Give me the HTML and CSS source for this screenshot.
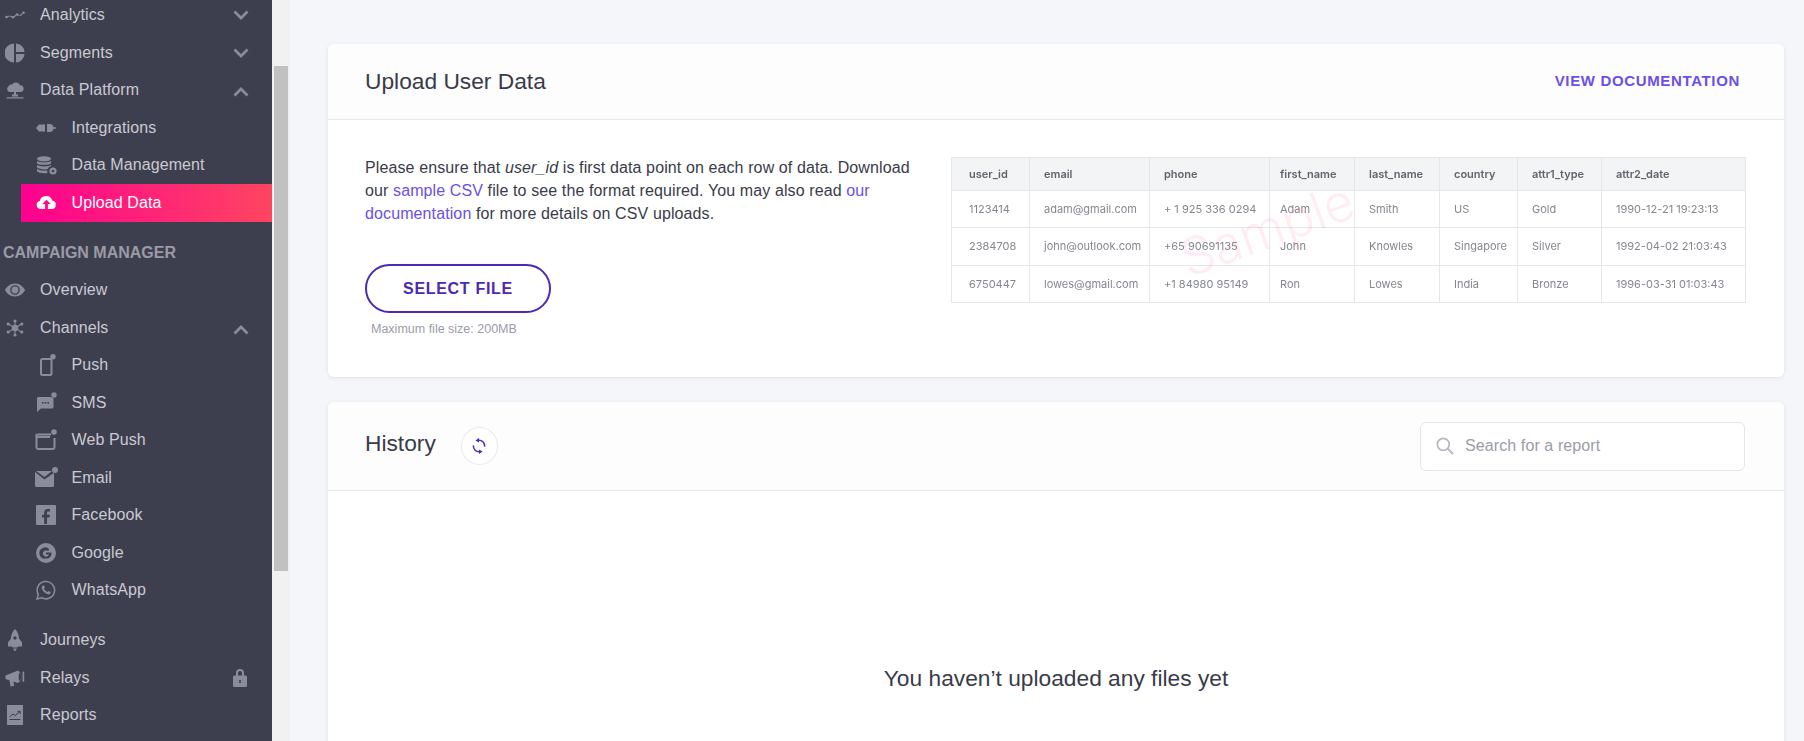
FILE: index.html
```html
<!DOCTYPE html>
<html lang="en">
<head>
<meta charset="utf-8">
<title>Upload User Data</title>
<link rel="stylesheet" href="styles.css">
</head>
<body>
<div class="app">
  <nav class="sidebar">
    <div class="nav-list">
      <a class="nav-item"><span class="ico"><svg width="20" height="8" viewBox="0 0 20 8"><path d="M1.5 6 L5 5 L8 6.3 L12 3.5 L15 4.8 L18.5 1.7" fill="none" stroke="currentColor" stroke-width="1.2" stroke-dasharray="3 .8"/><g fill="currentColor"><circle cx="1.5" cy="6" r="1.3"/><circle cx="8" cy="6.3" r="1.3"/><circle cx="12" cy="3.5" r="1.3"/><circle cx="18.5" cy="1.7" r="1.3"/></g></svg></span><span class="label">Analytics</span><svg class="chev" width="16" height="10" viewBox="0 0 16 10"><path d="M1.5 1.5 L8 8 L14.5 1.5" fill="none" stroke="currentColor" stroke-width="2.7"/></svg></a>
      <a class="nav-item"><span class="ico"><svg width="20" height="20" viewBox="0 0 20 20"><path fill="currentColor" d="M9 0.5 V19.5 A9.5 9.5 0 0 1 9 0.5Z M11 0.5 A9 9 0 0 1 19.5 9 H11Z M11 11 H19.5 A9 9 0 0 1 11 19.5Z"/></svg></span><span class="label">Segments</span><svg class="chev" width="16" height="10" viewBox="0 0 16 10"><path d="M1.5 1.5 L8 8 L14.5 1.5" fill="none" stroke="currentColor" stroke-width="2.7"/></svg></a>
      <a class="nav-item"><span class="ico"><svg width="18" height="18" viewBox="0 0 18 18"><path fill="currentColor" d="M4.5 11 A3 3 0 0 1 2.5 5.5 A3 3 0 0 1 6 3.5 A4.5 4.5 0 0 1 14 4.3 A3.4 3.4 0 0 1 15 11 H10 V13.5 H12 V15.5 H6 V13.5 H8 V11Z M0.5 16.2 H17.5 V17.4 H0.5Z"/></svg></span><span class="label">Data Platform</span><svg class="chev up" width="16" height="10" viewBox="0 0 16 10"><path d="M1.5 8.5 L8 2 L14.5 8.5" fill="none" stroke="currentColor" stroke-width="2.7"/></svg></a>
      <a class="nav-item sub"><span class="ico"><svg width="20" height="10" viewBox="0 0 20 10"><path fill="currentColor" d="M0 5 L3 1.5 H9 V8.5 H3Z M11 1 H14 A4 4 0 0 1 17.5 4.3 H20 V5.7 H17.5 A4 4 0 0 1 14 9 H11Z"/></svg></span><span class="label">Integrations</span></a>
      <a class="nav-item sub"><span class="ico"><svg width="21" height="19" viewBox="0 0 21 19"><g fill="currentColor"><ellipse cx="8" cy="2.8" rx="7" ry="2.6"/><path d="M1 4.8 C2 7 14 7 15 4.8 V7.2 C14 9.4 2 9.4 1 7.2Z M1 8.8 C2 11 14 11 15 8.8 V10 A5 5 0 0 0 11.5 13.3 C7 13.7 2 12.8 1 11.2Z M1 12.8 C3 14.6 7 14.8 11 14.6 L11.5 17 C7 17.6 2 16.6 1 15.2Z"/><circle cx="17" cy="15" r="3.6"/></g><circle cx="17" cy="15" r="1.3" fill="#3e3f4e"/></svg></span><span class="label">Data Management</span></a>
      <a class="nav-item sub active"><span class="ico"><svg width="21" height="13" viewBox="0 0 20 13"><path fill="currentColor" fill-rule="evenodd" d="M4 13 A4 4 0 0 1 3.3 5.1 A6.5 6.5 0 0 1 15.8 4.6 A4.3 4.3 0 0 1 16 13Z M10 3.8 L5.8 8 H8.6 V13 H11.4 V8 H14.2Z"/></svg></span><span class="label">Upload Data</span></a>

      <h3 class="nav-head">CAMPAIGN MANAGER</h3>
      <a class="nav-item"><span class="ico"><svg width="20" height="14" viewBox="0 0 20 14"><path fill="currentColor" fill-rule="evenodd" d="M10 0.5 C15 0.5 18.6 4 20 7 C18.6 10 15 13.5 10 13.5 C5 13.5 1.4 10 0 7 C1.4 4 5 0.5 10 0.5Z M10 2.2 A4.8 4.8 0 1 0 10 11.8 A4.8 4.8 0 1 0 10 2.2Z M10 3.6 A3.4 3.4 0 1 1 10 10.4 A3.4 3.4 0 1 1 10 3.6Z"/></svg></span><span class="label">Overview</span></a>
      <a class="nav-item"><span class="ico"><svg width="18" height="18" viewBox="0 0 18 18"><g stroke="currentColor" stroke-width="1.1"><path d="M9 9 L9 2 M9 9 L9 16 M9 9 L2.5 5 M9 9 L15.5 5 M9 9 L2.5 13 M9 9 L15.5 13"/></g><g fill="currentColor"><circle cx="9" cy="9" r="3.2"/><circle cx="9" cy="2" r="1.6"/><circle cx="9" cy="16" r="1.6"/><circle cx="2.2" cy="5" r="1.6"/><circle cx="15.8" cy="5" r="1.6"/><circle cx="2.2" cy="13" r="1.6"/><circle cx="15.8" cy="13" r="1.6"/></g></svg></span><span class="label">Channels</span><svg class="chev up" width="16" height="10" viewBox="0 0 16 10"><path d="M1.5 8.5 L8 2 L14.5 8.5" fill="none" stroke="currentColor" stroke-width="2.7"/></svg></a>
      <a class="nav-item sub"><span class="ico"><svg width="20" height="22" viewBox="0 0 20 22"><rect x="5" y="5" width="10.5" height="16" rx="1.5" fill="none" stroke="currentColor" stroke-width="2"/><circle cx="17" cy="2.8" r="2.7" fill="currentColor"/></svg></span><span class="label">Push</span></a>
      <a class="nav-item sub"><span class="ico"><svg width="22" height="22" viewBox="0 0 22 22"><path fill="currentColor" d="M3 5 H17 A1.5 1.5 0 0 1 18.5 6.5 V15 A1.5 1.5 0 0 1 17 16.5 H6 L2 20 V6.5 A1.5 1.5 0 0 1 3 5Z"/><g fill="#3e3f4e"><rect x="7" y="10" width="1.6" height="1.6"/><rect x="9.7" y="10" width="1.6" height="1.6"/><rect x="12.4" y="10" width="1.6" height="1.6"/></g><circle cx="19" cy="3" r="3" fill="currentColor" stroke="#3e3f4e" stroke-width="0.5"/></svg></span><span class="label">SMS</span></a>
      <a class="nav-item sub"><span class="ico"><svg width="22" height="22" viewBox="0 0 22 22"><path d="M2 8 H15 M1.2 7 A1.5 1.5 0 0 1 2.7 5.5 H16 M19.5 9 V18 A2 2 0 0 1 17.5 20 H3 A2 2 0 0 1 1.5 18 V7" fill="none" stroke="currentColor" stroke-width="2"/><circle cx="19" cy="3" r="2.8" fill="currentColor"/></svg></span><span class="label">Web Push</span></a>
      <a class="nav-item sub"><span class="ico"><svg width="24" height="22" viewBox="0 0 24 22"><path fill="currentColor" d="M2 4 H18 L10.5 10 Z M1 5 L10.5 12.5 L20 5.8 V18.5 A1.5 1.5 0 0 1 18.5 20 H2.5 A1.5 1.5 0 0 1 1 18.5Z"/><circle cx="21" cy="3" r="3" fill="currentColor"/></svg></span><span class="label">Email</span></a>
      <a class="nav-item sub"><span class="ico"><svg width="20" height="20" viewBox="0 0 20 20"><path fill="currentColor" fill-rule="evenodd" d="M1 0 H19 A1 1 0 0 1 20 1 V19 A1 1 0 0 1 19 20 H1 A1 1 0 0 1 0 19 V1 A1 1 0 0 1 1 0Z M11 19 V12.5 H13.5 L14 9.7 H11 V8 C11 7 11.4 6.6 12.4 6.6 H14 V4 C13.4 3.9 12.6 3.9 11.8 3.9 C9.5 3.9 8.2 5.3 8.2 7.6 V9.7 H6 V12.5 H8.2 V19Z"/></svg></span><span class="label">Facebook</span></a>
      <a class="nav-item sub"><span class="ico"><svg width="20" height="20" viewBox="0 0 20 20"><path fill="currentColor" fill-rule="evenodd" d="M10 0 A10 10 0 1 1 10 20 A10 10 0 1 1 10 0Z M13.4 6.6 L12 8 A3.1 3.1 0 1 0 13 11.6 H10 V9.4 H15.4 C15.9 13 13.5 15.6 10 15.6 A5.6 5.6 0 1 1 13.4 6.6Z"/></svg></span><span class="label">Google</span></a>
      <a class="nav-item sub"><span class="ico"><svg width="20" height="20" viewBox="0 0 20 20"><path d="M1 19 L2.3 14.4 A8.7 8.7 0 1 1 5.6 17.7Z" fill="none" stroke="currentColor" stroke-width="1.5"/><path fill="currentColor" d="M7 5.5 C6 6 5.5 7 5.8 8.3 C6.5 11 9 13.5 11.8 14.3 C13 14.6 14 14 14.5 13 L14.6 12 L12.6 11 L11.7 12 C10 11.4 8.6 10 8 8.4 L8.9 7.4 L8 5.5Z"/></svg></span><span class="label">WhatsApp</span></a>

      <a class="nav-item gap"><span class="ico"><svg width="16" height="23" viewBox="0 0 16 23"><path fill="currentColor" d="M8 0 C10.5 2.5 12 6 12 9.5 L15 13.5 V17.5 H11 L10.5 18.5 H5.5 L5 17.5 H1 V13.5 L4 9.5 C4 6 5.5 2.5 8 0Z M6 19.5 H10 L8 22.5Z"/><circle cx="8" cy="9" r="1.7" fill="#3e3f4e"/></svg></span><span class="label">Journeys</span></a>
      <a class="nav-item"><span class="ico"><svg width="20" height="18" viewBox="0 0 20 18"><path fill="currentColor" d="M0.5 6.5 L13 1.5 A7.5 7.5 0 0 1 13 14 L8.2 12.4 L9.3 16.8 L5.6 17.6 L4.4 11.3 L0.5 10Z"/><path fill="#3e3f4e" d="M14.2 3.4 C15.8 4.8 16.4 6.2 16.4 7.8 C16.4 9.4 15.8 10.6 14.2 12 C13.6 10 13.4 5.6 14.2 3.4Z"/><rect x="17.6" y="2.5" width="1.6" height="10.5" rx="0.8" fill="currentColor"/></svg></span><span class="label">Relays</span><svg class="lock" width="14" height="19" viewBox="0 0 14 19"><path fill="currentColor" fill-rule="evenodd" d="M3 7.5 V5 A4 4 0 0 1 11 5 V7.5 H12.5 A1.5 1.5 0 0 1 14 9 V17.5 A1.5 1.5 0 0 1 12.5 19 H1.5 A1.5 1.5 0 0 1 0 17.5 V9 A1.5 1.5 0 0 1 1.5 7.5Z M5 7.5 H9 V5 A2 2 0 0 0 5 5Z M6.2 12 V15 H7.8 V12Z"/></svg></a>
      <a class="nav-item"><span class="ico"><svg width="16" height="20" viewBox="0 0 16 20"><path fill="currentColor" d="M0 0 H16 V20 H0Z"/><path d="M2.5 12 L6 9 L8 10.5 L13 6.5 M10.5 6.3 H13.2 V9 M2.5 14.5 H13.5" fill="none" stroke="#3e3f4e" stroke-width="1"/></svg></span><span class="label">Reports</span></a>
    </div>
  </nav>
  <div class="scrollbar"><div class="thumb"></div></div>
  <main class="main">
    <section class="card upload-card">
      <header class="card-head">
        <h1 class="card-title">Upload User Data</h1>
        <a class="doc-link">VIEW DOCUMENTATION</a>
      </header>
      <div class="upload-body">
        <div class="upload-left">
          <p class="intro">Please ensure that <em>user_id</em> is first data point on each row of data. Download our <a>sample CSV</a> file to see the format required. You may also read <a>our documentation</a> for more details on CSV uploads.</p>
          <button class="select-btn">SELECT FILE</button>
          <div class="hint">Maximum file size: 200MB</div>
        </div>
        <div class="sample-wrap">
          <table class="sample">
            <colgroup><col class="c1"><col class="c2"><col class="c3"><col class="c4"><col class="c5"><col class="c6"><col class="c7"><col class="c8"></colgroup>
            <thead><tr><th class="first">user_id</th><th>email</th><th>phone</th><th class="tight">first_name</th><th>last_name</th><th>country</th><th>attr1_type</th><th>attr2_date</th></tr></thead>
            <tbody>
              <tr><td class="first">1123414</td><td>adam@gmail.com</td><td>+ 1 925 336 0294</td><td class="tight">Adam</td><td>Smith</td><td>US</td><td>Gold</td><td>1990-12-21 19:23:13</td></tr>
              <tr><td class="first">2384708</td><td>john@outlook.com</td><td>+65 90691135</td><td class="tight">John</td><td>Knowles</td><td>Singapore</td><td>Silver</td><td>1992-04-02 21:03:43</td></tr>
              <tr><td class="first">6750447</td><td>lowes@gmail.com</td><td>+1 84980 95149</td><td class="tight">Ron</td><td>Lowes</td><td>India</td><td>Bronze</td><td>1996-03-31 01:03:43</td></tr>
            </tbody>
          </table>
          <span class="watermark">Sample</span>
        </div>
      </div>
    </section>
    <section class="card history-card">
      <header class="card-head history-head">
        <div class="history-title">
          <h2 class="card-title">History</h2>
          <button class="refresh" aria-label="Refresh"><svg width="14" height="16" viewBox="0 0 14 16"><path d="M6 2.3 A5.7 5.7 0 0 1 12.6 8.6 M8 13.7 A5.7 5.7 0 0 1 1.4 7.4" fill="none" stroke="#4b28c8" stroke-width="1.5"/><path fill="#4b28c8" d="M7 0 L3.4 2.4 L7 4.6Z M7 16 L10.6 13.6 L7 11.4Z"/></svg></button>
        </div>
        <label class="search"><svg width="18" height="18" viewBox="0 0 18 18"><circle cx="7.3" cy="7.3" r="6" fill="none" stroke="#b4b6c0" stroke-width="1.7"/><path d="M11.6 11.6 L17 17" stroke="#b4b6c0" stroke-width="1.9"/></svg><span class="search-text">Search for a report</span></label>
      </header>
      <div class="empty">You haven’t uploaded any files yet</div>
    </section>
  </main>
</div>
</body>
</html>
```
FILE: styles.css
```css
* { box-sizing: border-box; }
html, body { margin: 0; height: 100%; overflow: hidden; }
body { font-family: "Liberation Sans", Arial, sans-serif; background: #f5f6fa; color: #3a3b4a; }
.app { display: flex; height: 741px; }

.sidebar { width: 272px; flex: none; background: #3e3f4e; overflow: hidden; }
.nav-list { margin-top: -3.3px; display: flex; flex-direction: column; }
.nav-item { display: flex; align-items: center; height: 37.5px; padding-left: 3px; color: #c9cad2; font-size: 16px; letter-spacing: .1px; flex: none; }
.nav-item .ico { width: 24px; flex: none; display: flex; justify-content: center; align-items: center; color: #8b8c9b; margin-right: 13px; }
.nav-item.sub { padding-left: 34px; }
.nav-item.sub .ico { margin-right: 13.5px; }
.nav-item.gap { margin-top: 12.5px; }
.nav-item.active { margin-left: 21px; padding-left: 13px; background: linear-gradient(90deg, #ff0090, #ff4560); color: #fff; }
.nav-item.active .ico { color: #fff; }
.label { flex: 1; }
.chev { color: #8b8c9b; margin-right: 23px; }
.chev.up { margin-top: 4px; }
.lock { color: #8b8c9b; margin-right: 25px; }
.nav-head { margin: 12.5px 0 0 3px; height: 37.5px; line-height: 37.5px; font-size: 16px; font-weight: 700; color: #9a9ba6; }

.scrollbar { width: 18px; flex: none; background: #f1f1f1; padding: 66px 2px 0; }
.thumb { height: 505px; background: #c1c1c1; }

.main { flex: 1; min-width: 0; padding: 44px 20px 0 38px; overflow: hidden; }
.card { background: #fff; border-radius: 6px; box-shadow: 0 1px 4px rgba(40, 45, 80, .1); }
.card-head { display: flex; align-items: center; justify-content: space-between; background: #fdfdfd; border-bottom: 1px solid #e8e9ec; border-radius: 6px 6px 0 0; padding: 0 44px 1px 37px; height: 76px; }
.card-title { margin: 0; font-size: 22.75px; font-weight: 400; color: #3a3b4a; }
.doc-link { font-size: 15px; font-weight: 700; letter-spacing: .65px; color: #6b4fe8; margin-bottom: 1px; }

.upload-card { height: 333px; }
.upload-body { display: flex; justify-content: space-between; padding: 36px 38px 0 37px; }
.upload-left { width: 560px; }
.intro { margin: 0; font-size: 16px; letter-spacing: .11px; line-height: 23px; color: #3a3b4a; }
.intro a { color: #6b4fe8; }
.select-btn { display: block; margin-top: 39px; width: 186px; height: 49px; border: 2px solid #4b28b8; border-radius: 25px; background: #fff; color: #4b28b8; font: 700 16px "Liberation Sans", Arial, sans-serif; letter-spacing: .7px; }
.hint { margin: 9px 0 0 6px; font-size: 12.5px; color: #9a9ca8; }

.sample-wrap { position: relative; width: 795px; margin-top: 1px; filter: blur(.3px); }
.sample { width: 794px; table-layout: fixed; border-collapse: collapse; font: 11px Inter, "Liberation Sans", sans-serif; color: #85878f; }
.c1 { width: 78px; } .c2 { width: 120px; } .c3 { width: 120px; } .c4 { width: 85px; }
.c5 { width: 85px; } .c6 { width: 78px; } .c7 { width: 84px; } .c8 { width: 144px; }
.sample th, .sample td { border: 1px solid #e6e7ea; text-align: left; padding: 0 0 0 14px; white-space: nowrap; overflow: hidden; }
.sample th { height: 32.5px; background: #f3f4f6; font-weight: 600; color: #62646c; }
.sample td { height: 37.6px; }
.sample .first { padding-left: 17px; }
.sample .tight { padding-left: 10px; }
.watermark { position: absolute; left: 226px; top: 41px; font: 300 52px Inter, "Liberation Sans", sans-serif; color: #ff4f8b; opacity: .1; transform: rotate(-20deg); transform-origin: center; }

.history-card { margin-top: 25px; height: 400px; }
.history-head { height: 89px; padding-right: 39px; padding-bottom: 0; }
.history-title { display: flex; align-items: center; gap: 25px; }
.history-title .card-title { margin-top: -6px; }
.refresh { width: 37px; height: 38px; padding: 0; border: 1px solid #e8e9ec; border-radius: 50%; background: #fff; display: flex; align-items: center; justify-content: center; }
.search { display: flex; align-items: center; width: 325px; height: 49px; border: 1px solid #e5e6ea; border-radius: 6px; background: #fff; padding-left: 15px; gap: 11px; }
.search-text { font-size: 16px; letter-spacing: .1px; color: #9a9ca8; }
.empty { text-align: center; margin-top: 174px; font-size: 22.75px; color: #3a3b4a; }
```
